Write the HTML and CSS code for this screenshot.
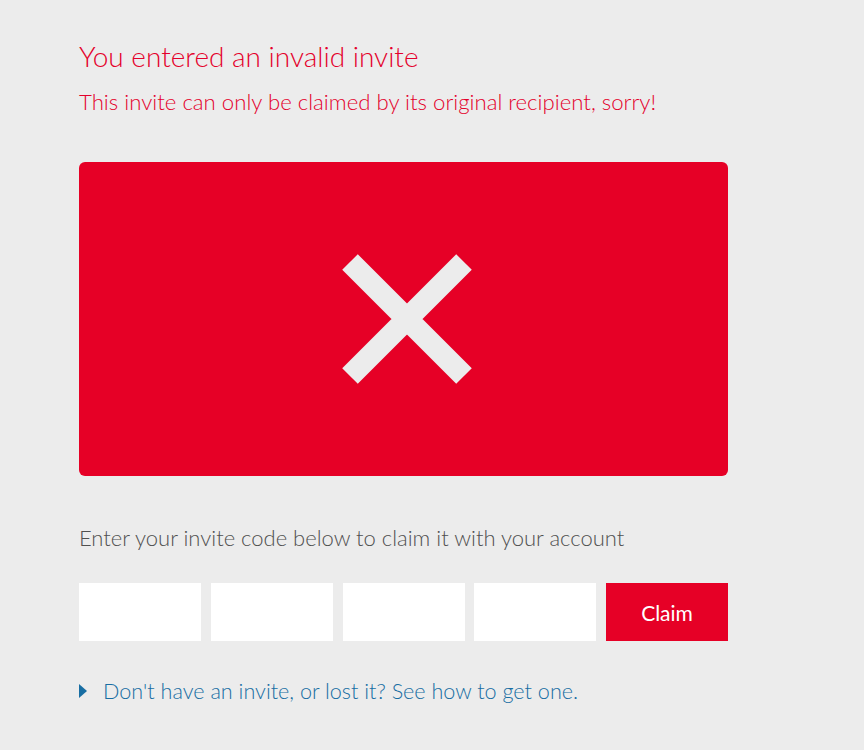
FILE: index.html
```html
<!DOCTYPE html>
<html lang="en">
<head>
<meta charset="utf-8">
<title>Invalid invite</title>
<link rel="stylesheet" href="styles.css">
</head>
<body>
  <div class="page">
    <h1 class="title">You entered an invalid invite</h1>
    <p class="subtitle">This invite can only be claimed by its original recipient, sorry!</p>

    <div class="status">
      <svg class="cross" width="130" height="130" viewBox="0 0 130 130">
        <path d="M8 8 L122 122 M122 8 L8 122" />
      </svg>
    </div>

    <p class="prompt">Enter your invite code below to claim it with your account</p>

    <form class="claim">
      <input class="code" type="text">
      <input class="code" type="text">
      <input class="code" type="text">
      <input class="code" type="text">
      <button class="claim-btn" type="button">Claim</button>
    </form>

    <a class="help" href="#"><span class="caret"></span>Don't have an invite, or lost it? See how to get one.</a>
  </div>
</body>
</html>
```

FILE: styles.css
```css
html, body {
  margin: 0;
  padding: 0;
  background: #ececec;
}

body {
  font-family: Lato, "Open Sans", sans-serif;
  font-weight: 300;
}

.page {
  width: 649px;
  margin-left: 79px;
  padding-top: 38px;
}

.title {
  margin: 0;
  font-size: 28px;
  font-weight: 300;
  line-height: 36px;
  color: #e4002b;
}

.subtitle {
  margin: 13px 0 0;
  font-size: 22.2px;
  line-height: 30px;
  color: #e4002b;
}

.status {
  margin-top: 45px;
  height: 314px;
  background: #e60026;
  border-radius: 6px;
  display: flex;
  align-items: center;
  justify-content: center;
  padding-left: 7px;
  box-sizing: border-box;
}

.cross path {
  stroke: #ececec;
  stroke-width: 22;
  fill: none;
}

.prompt {
  margin: 47px 0 0;
  font-size: 22px;
  line-height: 30px;
  color: #505050;
}

.claim {
  margin-top: 30px;
  display: flex;
  justify-content: space-between;
}

.code {
  width: 122px;
  height: 58px;
  margin: 0;
  border: 0;
  padding: 0 10px;
  box-sizing: border-box;
  background: #fff;
  font: inherit;
}

.claim-btn {
  width: 122px;
  height: 58px;
  margin: 0;
  border: 0;
  background: #e60026;
  color: #fff;
  font-family: Lato, "Open Sans", sans-serif;
  font-weight: 400;
  font-size: 21px;
}

.help {
  display: inline-flex;
  align-items: center;
  margin-top: 35px;
  font-size: 21.6px;
  line-height: 30px;
  color: #186ea3;
  text-decoration: none;
}

.caret {
  width: 0;
  height: 0;
  border-top: 7px solid transparent;
  border-bottom: 7px solid transparent;
  border-left: 8px solid #186ea3;
  margin-right: 16px;
}
```
